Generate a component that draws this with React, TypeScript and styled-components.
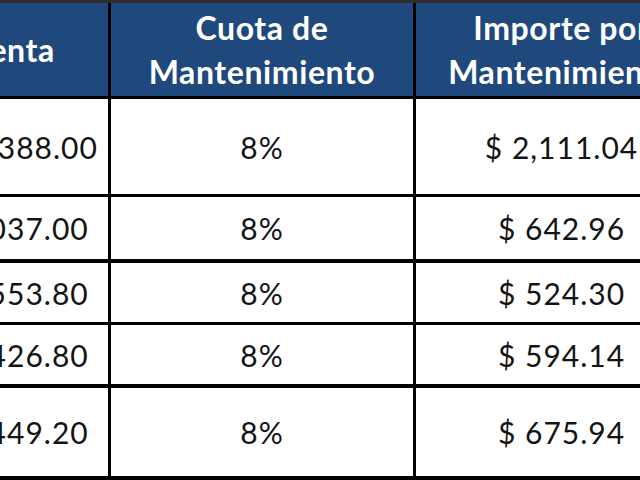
import React from "react";
import styled, { createGlobalStyle } from "styled-components";

const Global = createGlobalStyle`
  html, body { margin: 0; padding: 0; background: #ffffff; overflow: hidden; }
  #root { width: 640px; height: 480px; overflow: hidden; }
`;

const Viewport = styled.div`
  width: 640px;
  height: 480px;
  overflow: hidden;
  background: #ffffff;
`;

const Table = styled.div`
  display: flex;
  flex-direction: column;
  margin-left: -84px;
  width: 791px;
  border-top: 3px solid #2e2e2e;
  font-family: Lato, "Open Sans", sans-serif;
`;

const Row = styled.div<{ $h: number; $line: number; $head?: boolean }>`
  display: grid;
  grid-template-columns: 195px 305px 291px;
  height: ${(p) => p.$h}px;
  border-bottom: ${(p) => p.$line}px solid #000;
  background: ${(p) => (p.$head ? "#1F497D" : "#ffffff")};
`;

const Cell = styled.div<{ $last?: boolean }>`
  display: flex;
  align-items: center;
  justify-content: center;
  text-align: center;
  box-sizing: border-box;
  border-right: ${(p) => (p.$last ? "none" : "3px solid #000")};
  white-space: nowrap;
`;

const HeadText = styled.span`
  color: #ffffff;
  font-weight: 700;
  font-size: 32px;
  letter-spacing: 0.6px;
  line-height: 44px;
`;

const BodyText = styled.span`
  color: #141414;
  font-size: 30px;
  letter-spacing: 1px;
  line-height: 34px;
`;

const rows = [
  { venta: "$ 26,388.00", importe: "$ 2,111.04", h: 95, line: 3 },
  { venta: "$ 8,037.00", importe: "$ 642.96", h: 62, line: 4 },
  { venta: "$ 6,553.80", importe: "$ 524.30", h: 59, line: 3 },
  { venta: "$ 7,426.80", importe: "$ 594.14", h: 59, line: 4 },
  { venta: "$ 8,449.20", importe: "$ 675.94", h: 88, line: 4 },
];

export default function App() {
  return (
    <Viewport>
      <Global />
      <Table>
        <Row $h={93} $line={3} $head>
          <Cell>
            <HeadText>Venta</HeadText>
          </Cell>
          <Cell>
            <HeadText>
              Cuota de
              <br />
              Mantenimiento
            </HeadText>
          </Cell>
          <Cell $last>
            <HeadText>
              Importe por
              <br />
              Mantenimiento
            </HeadText>
          </Cell>
        </Row>
        {rows.map((r) => (
          <Row key={r.venta} $h={r.h} $line={r.line}>
            <Cell>
              <BodyText>{r.venta}</BodyText>
            </Cell>
            <Cell>
              <BodyText>8%</BodyText>
            </Cell>
            <Cell $last>
              <BodyText>{r.importe}</BodyText>
            </Cell>
          </Row>
        ))}
      </Table>
    </Viewport>
  );
}
